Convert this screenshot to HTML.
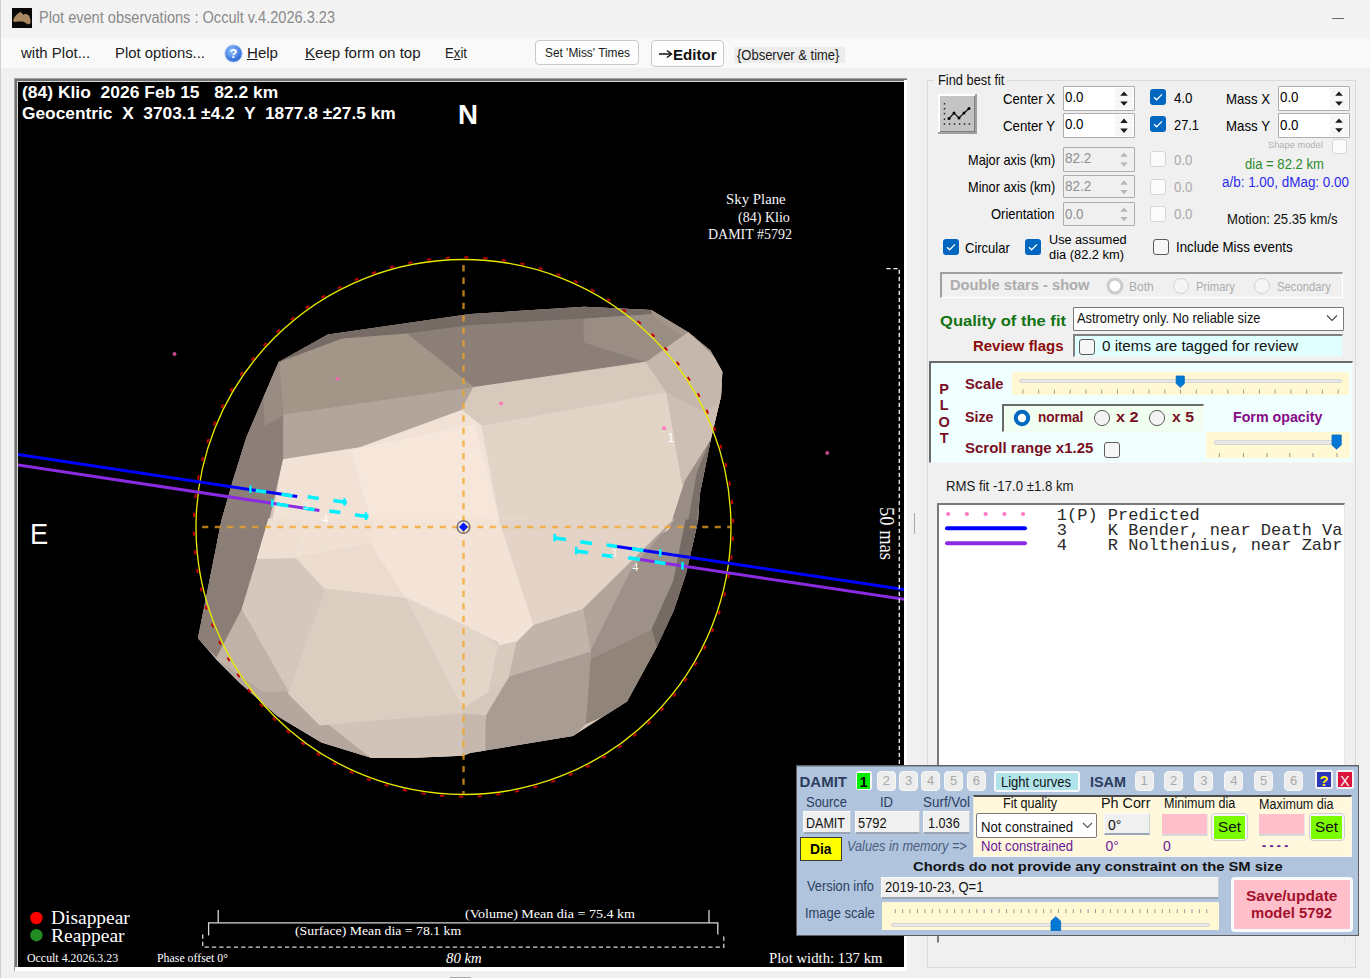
<!DOCTYPE html>
<html><head><meta charset="utf-8"><title>Plot event observations</title>
<style>
html,body{margin:0;padding:0;}
body{width:1370px;height:978px;overflow:hidden;position:relative;background:#f0f0f0;font-family:"Liberation Sans",sans-serif;}
.a{position:absolute;}
.t{position:absolute;line-height:0;white-space:pre;transform-origin:0 0;}

</style></head><body>
<div class="a" style="left:0.0px;top:0.0px;width:1370.0px;height:38.0px;background:#f3f3f3;"></div>
<div class="a" style="left:0.0px;top:38.0px;width:1370.0px;height:30.0px;background:#f9f9f9;"></div>
<div class="a" style="left:0.0px;top:0.0px;width:1.0px;height:978.0px;background:#cfcfcf;"></div>
<svg class="a" style="left:12px;top:8px" width="20" height="20" viewBox="0 0 20 20"><rect width="20" height="20" fill="#0a0908"/><path d="M1.1 12.3 C2 9 5 6 8.3 4.1 C10 4.5 10.5 6.5 11.3 6.7 C12 6 13 5.8 14.2 6.1 C16.5 6.8 17.8 8.5 17.8 9.7 C18.6 11.5 18.8 13.5 18.5 14.9 C18 16 16.5 16.5 15.9 16.2 C14 15.5 12.5 14 11.3 13.6 C9.5 13.4 7.5 13.6 6 13.6 C4.5 14 3 14.2 2.8 13.9 C1.8 13.6 1 13 1.1 12.3 Z" fill="#a98a62"/></svg>
<div class="t" id="t0" style="left:38.80px;top:18.36px;font-size:15.7px;font-family:'Liberation Sans', sans-serif;color:#8a8a8a;transform:scaleX(0.9283);">Plot event observations : Occult v.4.2026.3.23</div>
<div class="a" style="left:1332.0px;top:18.0px;width:12.0px;height:1.0px;background:#6a6a6a;"></div>
<div class="a" style="left:450.0px;top:976.5px;width:21.0px;height:1.5px;background:#a8a8a8;"></div>
<div class="t" id="t1" style="left:21.00px;top:52.80px;font-size:15px;font-family:'Liberation Sans', sans-serif;color:#1c1c1c;">with Plot...</div>
<div class="t" id="t2" style="left:115.00px;top:52.80px;font-size:15px;font-family:'Liberation Sans', sans-serif;color:#1c1c1c;transform:scaleX(0.9902);">Plot options...</div>
<svg class="a" style="left:224px;top:44px" width="19" height="19" viewBox="0 0 19 19"><defs><radialGradient id="hg" cx="40%" cy="35%" r="70%"><stop offset="0" stop-color="#8fc0ff"/><stop offset="1" stop-color="#1f5fd0"/></radialGradient></defs><circle cx="9.5" cy="9.5" r="8.6" fill="url(#hg)" stroke="#a9c4ee" stroke-width="1"/><text x="9.6" y="14.3" text-anchor="middle" font-family="Liberation Sans" font-weight="bold" font-size="13" fill="#fff">?</text></svg>
<div class="t" id="t3" style="left:247.00px;top:52.80px;font-size:15px;font-family:'Liberation Sans', sans-serif;color:#1c1c1c;transform:scaleX(1.0040);"><u>H</u>elp</div>
<div class="t" id="t4" style="left:305.00px;top:52.80px;font-size:15px;font-family:'Liberation Sans', sans-serif;color:#1c1c1c;transform:scaleX(1.0044);"><u>K</u>eep form on top</div>
<div class="t" id="t5" style="left:445.00px;top:52.80px;font-size:15px;font-family:'Liberation Sans', sans-serif;color:#1c1c1c;transform:scaleX(0.8795);">E<u>x</u>it</div>
<div class="a" style="left:535.0px;top:40.0px;width:104.0px;height:25.0px;background:#fdfdfd;border:1px solid #c9c9c9;box-sizing:border-box;border-radius:4px;"></div>
<div class="t" id="t6" style="left:544.50px;top:52.67px;font-size:12.5px;font-family:'Liberation Sans', sans-serif;color:#1a1a1a;transform:scaleX(0.9496);">Set &#x27;Miss&#x27; Times</div>
<div class="a" style="left:651.0px;top:40.0px;width:73.0px;height:27.0px;background:#fdfdfd;border:1px solid #c9c9c9;box-sizing:border-box;border-radius:4px;"></div>
<svg class="a" style="left:658px;top:48px" width="16" height="12"><line x1="1" y1="6" x2="13" y2="6" stroke="#111" stroke-width="1.5"/><polyline points="9,2.5 13.5,6 9,9.5" fill="none" stroke="#111" stroke-width="1.5"/></svg>
<div class="t" id="t7" style="left:673.00px;top:54.80px;font-size:15px;font-family:'Liberation Sans', sans-serif;color:#111;font-weight:bold;transform:scaleX(1.0036);">Editor</div>
<div class="a" style="left:734.0px;top:47.0px;width:111.0px;height:16.0px;background:#ececec;"></div>
<div class="t" id="t8" style="left:737.00px;top:55.45px;font-size:14px;font-family:'Liberation Sans', sans-serif;color:#1a1a1a;transform:scaleX(0.9267);">{Observer &amp; time}</div>
<div class="a" style="left:14.0px;top:78.0px;width:893.0px;height:893.0px;background:#a0a0a0;"></div>
<div class="a" style="left:15.4px;top:79.2px;width:891.6px;height:891.8px;background:#707070;"></div>
<div class="a" style="left:17.0px;top:80.7px;width:890.0px;height:890.3px;background:#d6d6d6;"></div>
<div class="a" style="left:903.7px;top:79.5px;width:3.5px;height:891.5px;background:#ffffff;"></div>
<div class="a" style="left:14.5px;top:967.0px;width:892.7px;height:4.0px;background:#ffffff;"></div>
<div class="a" style="left:18.2px;top:82.0px;width:885.5px;height:885.0px;background:#000000;"></div>
<svg class="a" style="left:18px;top:82px" width="886" height="885" viewBox="18 82 886 885">
<defs><clipPath id="sil"><polygon points="278.7,362.0 328.0,334.4 470.0,314.0 584.2,306.8 651.2,310.0 688.6,332.4 710.5,350.6 722.4,371.8 721.1,395.8 710.5,441.0 699.8,494.3 698.2,520.0 686.0,574.0 673.7,610.8 656.5,647.6 627.1,701.6 607.4,713.9 573.1,736.0 470.0,753.1 463.5,755.7 409.0,758.0 371.7,758.0 321.4,742.6 277.6,716.3 240.4,683.5 216.3,659.4 197.9,638.2 205.8,598.8 221.5,520.0 233.0,480.0 246.4,437.2 264.0,396.0"/></clipPath></defs>
<polygon points="278.7,362.0 328.0,334.4 470.0,314.0 584.2,306.8 651.2,310.0 688.6,332.4 710.5,350.6 722.4,371.8 721.1,395.8 710.5,441.0 699.8,494.3 698.2,520.0 686.0,574.0 673.7,610.8 656.5,647.6 627.1,701.6 607.4,713.9 573.1,736.0 470.0,753.1 463.5,755.7 409.0,758.0 371.7,758.0 321.4,742.6 277.6,716.3 240.4,683.5 216.3,659.4 197.9,638.2 205.8,598.8 221.5,520.0 233.0,480.0 246.4,437.2 264.0,396.0" fill="#d3c4b9"/>
<g clip-path="url(#sil)" shape-rendering="auto">
<polygon points="282.6,458.6 359.5,446.8 462.0,409.3 481.7,425.1 505.3,547.3 268.8,547.3" fill="#f2e2d6" stroke="#f2e2d6" stroke-width="1.1" stroke-linejoin="round"/>
<polygon points="351.6,450.7 473.8,425.1 505.3,547.3 379.2,547.3" fill="#f7e7db" stroke="#f7e7db" stroke-width="1.1" stroke-linejoin="round"/>
<polygon points="481.7,425.1 666.9,391.6 682.7,484.2 702.4,547.3 505.3,547.3" fill="#e3d4c8" stroke="#e3d4c8" stroke-width="1.1" stroke-linejoin="round"/>
<polygon points="404.8,332.4 584.2,306.8 584.2,342.3 647.2,362.0 473.8,387.6" fill="#8b7f77" stroke="#8b7f77" stroke-width="1.1" stroke-linejoin="round"/>
<polygon points="584.2,306.8 651.2,310.0 688.6,332.4 647.2,362.0 584.2,342.3" fill="#9a8d84" stroke="#9a8d84" stroke-width="1.1" stroke-linejoin="round"/>
<polygon points="278.7,362.0 328.0,334.4 404.8,332.4 473.8,387.6 282.6,415.2" fill="#a39689" stroke="#a39689" stroke-width="1.1" stroke-linejoin="round"/>
<polygon points="282.6,415.2 473.8,387.6 462.0,409.3 359.5,446.8 282.6,458.6" fill="#b2a59b" stroke="#b2a59b" stroke-width="1.1" stroke-linejoin="round"/>
<polygon points="278.7,362.0 328.0,334.4 470.0,314.0 584.2,306.8 651.2,310.0 651.2,313.5 584.0,318.0 470.0,324.4 406.0,333.0 342.0,338.0 283.0,360.0" fill="#766b65" stroke="#766b65" stroke-width="1.1" stroke-linejoin="round"/>
<polygon points="651.2,310.0 688.6,332.4 710.5,350.6 722.4,371.8 715.0,372.0 691.0,342.0 655.0,317.0" fill="#a39589" stroke="#a39589" stroke-width="1.1" stroke-linejoin="round"/>
<polygon points="473.8,387.6 647.2,362.0 666.9,391.6 481.7,425.1 462.0,409.3" fill="#d8c9bd" stroke="#d8c9bd" stroke-width="1.1" stroke-linejoin="round"/>
<polygon points="647.2,362.0 688.6,332.4 720.2,364.0 722.1,409.3 682.7,484.2 666.9,391.6" fill="#c6b8ad" stroke="#c6b8ad" stroke-width="1.1" stroke-linejoin="round"/>
<polygon points="666.9,391.6 722.1,409.3 721.1,395.8 710.5,441.0 685.2,481.0 682.7,484.2" fill="#cdbfb4" stroke="#cdbfb4" stroke-width="1.1" stroke-linejoin="round"/>
<polygon points="646.6,362.5 691.8,338.6 722.4,371.8 721.1,395.8 705.0,411.8 666.6,391.8" fill="#c5b7ac" stroke="#c5b7ac" stroke-width="1.1" stroke-linejoin="round"/>
<polygon points="710.5,441.0 699.8,494.3 691.8,560.2 659.9,560.2 685.2,481.0" fill="#9a8d85" stroke="#9a8d85" stroke-width="1.1" stroke-linejoin="round"/>
<polygon points="710.5,441.0 699.8,494.3 691.8,560.2 681.9,560.2 697.2,473.0" fill="#7a6f69" stroke="#7a6f69" stroke-width="1.1" stroke-linejoin="round"/>
<polygon points="278.7,362.0 282.6,415.2 282.6,458.6 269.0,519.0 263.0,540.0 210.0,540.0 233.0,480.0 246.4,437.2 264.0,396.0" fill="#8c7f77" stroke="#8c7f77" stroke-width="1.1" stroke-linejoin="round"/>
<polygon points="278.7,362.0 282.6,415.2 264.9,425.1 264.0,396.0" fill="#998c83" stroke="#998c83" stroke-width="1.1" stroke-linejoin="round"/>
<polygon points="221.5,520.0 269.0,519.0 257.5,558.5 241.8,610.3 217.0,657.5 197.9,638.2 205.8,598.8" fill="#8b7e76" stroke="#8b7e76" stroke-width="1.1" stroke-linejoin="round"/>
<polygon points="269.0,519.0 375.3,520.0 371.3,543.6 296.4,557.4 326.0,589.0 257.5,558.5" fill="#f1e1d5" stroke="#f1e1d5" stroke-width="1.1" stroke-linejoin="round"/>
<polygon points="296.4,557.4 371.3,543.6 406.8,598.8 326.0,589.0" fill="#ecdccf" stroke="#ecdccf" stroke-width="1.1" stroke-linejoin="round"/>
<polygon points="375.3,520.0 529.0,520.0 533.4,626.6 515.9,642.1 498.4,646.0 475.1,630.5 406.8,598.8 371.3,543.6" fill="#f4e3d7" stroke="#f4e3d7" stroke-width="1.1" stroke-linejoin="round"/>
<polygon points="257.5,558.5 295.8,558.5 325.0,590.0 286.8,691.3 241.8,610.3" fill="#d6c7bc" stroke="#d6c7bc" stroke-width="1.1" stroke-linejoin="round"/>
<polygon points="217.0,657.5 241.8,610.3 288.5,692.3 262.3,692.3 216.3,659.4" fill="#c1b2a7" stroke="#c1b2a7" stroke-width="1.1" stroke-linejoin="round"/>
<polygon points="216.3,659.4 262.3,692.3 288.5,692.3 330.1,725.1 371.7,758.0 321.4,742.6 277.6,716.3 240.4,683.5" fill="#b5a79d" stroke="#b5a79d" stroke-width="1.1" stroke-linejoin="round"/>
<polygon points="269.0,519.0 300.0,519.0 296.4,557.4 257.5,558.5" fill="#efdfd3" stroke="#efdfd3" stroke-width="1.1" stroke-linejoin="round"/>
<polygon points="326.0,589.0 406.8,598.8 497.4,642.2 509.3,677.7 462.0,713.1 320.1,725.0 288.5,693.4" fill="#dccdc1" stroke="#dccdc1" stroke-width="1.1" stroke-linejoin="round"/>
<polygon points="406.8,598.8 475.1,630.5 463.5,708.2" fill="#e4d5c9" stroke="#e4d5c9" stroke-width="1.1" stroke-linejoin="round"/>
<polygon points="330.1,725.1 461.6,714.0 463.5,714.0 463.5,755.7 409.0,758.0 371.7,758.0" fill="#d2c3b8" stroke="#d2c3b8" stroke-width="1.1" stroke-linejoin="round"/>
<polygon points="470.0,519.0 499.4,520.0 533.8,625.5 514.2,645.2 470.0,628.0" fill="#f3e3d7" stroke="#f3e3d7" stroke-width="1.1" stroke-linejoin="round"/>
<polygon points="499.4,520.0 673.7,520.0 582.9,609.6 533.8,625.5" fill="#e4d4c8" stroke="#e4d4c8" stroke-width="1.1" stroke-linejoin="round"/>
<polygon points="673.7,520.0 661.4,534.7 632.0,569.1 590.2,652.5 582.9,609.6" fill="#b3a59b" stroke="#b3a59b" stroke-width="1.1" stroke-linejoin="round"/>
<polygon points="661.4,534.7 686.0,520.0 673.7,581.3 651.6,630.4 590.2,659.9 590.2,652.5 632.0,569.1" fill="#9e9189" stroke="#9e9189" stroke-width="1.1" stroke-linejoin="round"/>
<polygon points="686.0,520.0 698.2,520.0 686.0,574.0 673.7,610.8 656.5,647.6 651.6,630.4 673.7,581.3" fill="#756a64" stroke="#756a64" stroke-width="1.1" stroke-linejoin="round"/>
<polygon points="590.2,659.9 651.6,630.4 656.5,647.6 627.1,701.6 607.4,713.9 585.3,723.7" fill="#918479" stroke="#918479" stroke-width="1.1" stroke-linejoin="round"/>
<polygon points="514.2,645.2 533.8,625.5 582.9,609.6 590.2,652.5 509.3,677.1" fill="#c2b4aa" stroke="#c2b4aa" stroke-width="1.1" stroke-linejoin="round"/>
<polygon points="509.3,677.1 590.2,652.5 590.2,659.9 585.3,723.7 573.1,736.0 482.3,750.7 487.2,711.4" fill="#a99c93" stroke="#a99c93" stroke-width="1.1" stroke-linejoin="round"/>
<polygon points="475.1,630.5 498.4,646.0 488.7,692.6 463.5,708.2" fill="#e4d5c9" stroke="#e4d5c9" stroke-width="1.1" stroke-linejoin="round"/>
<polygon points="498.4,646.0 515.9,642.1 508.2,677.1 488.7,692.6" fill="#d9cabe" stroke="#d9cabe" stroke-width="1.1" stroke-linejoin="round"/>
<polygon points="463.5,708.2 488.7,692.6 508.2,677.1 484.9,715.9 463.5,714.0" fill="#d7c8bc" stroke="#d7c8bc" stroke-width="1.1" stroke-linejoin="round"/>
<polygon points="463.5,714.0 484.9,715.9 484.9,750.9 463.5,755.7" fill="#c6b8ad" stroke="#c6b8ad" stroke-width="1.1" stroke-linejoin="round"/>
</g>
<circle cx="463.5" cy="527" r="269.7" fill="none" stroke="#c80000" stroke-width="1.9" stroke-dasharray="4.2 14.63" stroke-dashoffset="9.1"/>
<circle cx="463.5" cy="527" r="267.5" fill="none" stroke="#e8e800" stroke-width="1.35"/>
<line x1="196" y1="527" x2="731" y2="527" stroke="#f2a520" stroke-opacity="0.74" stroke-width="2.4" stroke-dasharray="6.1 6.4" stroke-dashoffset="6.3"/>
<line x1="463.5" y1="259.5" x2="463.5" y2="794.5" stroke="#f2a520" stroke-opacity="0.74" stroke-width="2.4" stroke-dasharray="6.3 6.22" stroke-dashoffset="6.92"/>
<circle cx="174.5" cy="354.0" r="2" fill="#ff60b8" fill-opacity="0.75"/>
<circle cx="337.7" cy="378.7" r="2" fill="#ff60b8" fill-opacity="0.75"/>
<circle cx="501.1" cy="403.5" r="2" fill="#ff60b8" fill-opacity="0.75"/>
<circle cx="664.1" cy="428.2" r="2" fill="#ff60b8" fill-opacity="0.75"/>
<circle cx="827.2" cy="452.9" r="2" fill="#ff60b8" fill-opacity="0.75"/>
<line x1="18" y1="454.6" x2="297.2" y2="496.6" stroke="#0000ff" stroke-width="3"/>
<line x1="617" y1="546.4" x2="904" y2="589.6" stroke="#0000ff" stroke-width="3"/>
<line x1="18" y1="465.1" x2="319.4" y2="510.4" stroke="#8a2be2" stroke-width="3"/>
<line x1="640" y1="559.6" x2="904" y2="599.3" stroke="#8a2be2" stroke-width="3"/>
<line x1="255.7" y1="490.4" x2="266.2" y2="492.0" stroke="#00f0ff" stroke-width="3.5"/>
<line x1="281.4" y1="494.2" x2="292.5" y2="495.9" stroke="#00f0ff" stroke-width="3.5"/>
<line x1="307.7" y1="496.7" x2="318.8" y2="498.4" stroke="#00f0ff" stroke-width="3.5"/>
<line x1="333.4" y1="500.6" x2="346.8" y2="502.6" stroke="#00f0ff" stroke-width="3.5"/>
<line x1="250.4" y1="485.6" x2="250.4" y2="493.1" stroke="#00f0ff" stroke-width="2.5"/>
<line x1="344.5" y1="498.2" x2="344.5" y2="505.7" stroke="#00f0ff" stroke-width="2.5"/>
<line x1="276.7" y1="504.0" x2="288.4" y2="505.7" stroke="#00f0ff" stroke-width="3.5"/>
<line x1="303.6" y1="508.0" x2="314.7" y2="509.7" stroke="#00f0ff" stroke-width="3.5"/>
<line x1="329.3" y1="510.9" x2="340.4" y2="512.6" stroke="#00f0ff" stroke-width="3.5"/>
<line x1="355" y1="514.8" x2="368.4" y2="516.8" stroke="#00f0ff" stroke-width="3.5"/>
<line x1="272.3" y1="499.3" x2="272.3" y2="506.8" stroke="#00f0ff" stroke-width="2.5"/>
<line x1="366" y1="512.4" x2="366" y2="519.9" stroke="#00f0ff" stroke-width="2.5"/>
<line x1="554.6" y1="537.9" x2="566" y2="539.6" stroke="#00f0ff" stroke-width="3.5"/>
<line x1="580.3" y1="541.7" x2="592" y2="543.5" stroke="#00f0ff" stroke-width="3.5"/>
<line x1="606.6" y1="544.9" x2="617" y2="546.4" stroke="#00f0ff" stroke-width="3.5"/>
<line x1="632" y1="548.7" x2="643.4" y2="550.4" stroke="#00f0ff" stroke-width="3.5"/>
<line x1="554.6" y1="533.9" x2="554.6" y2="541.4" stroke="#00f0ff" stroke-width="2.5"/>
<line x1="660.3" y1="549.0" x2="660.3" y2="556.5" stroke="#00f0ff" stroke-width="2.5"/>
<line x1="576.2" y1="551.0" x2="588" y2="552.8" stroke="#00f0ff" stroke-width="3.5"/>
<line x1="601.9" y1="554.9" x2="613" y2="556.5" stroke="#00f0ff" stroke-width="3.5"/>
<line x1="628.2" y1="557.8" x2="639.9" y2="559.6" stroke="#00f0ff" stroke-width="3.5"/>
<line x1="654.5" y1="561.8" x2="665.6" y2="563.4" stroke="#00f0ff" stroke-width="3.5"/>
<line x1="576.2" y1="547.0" x2="576.2" y2="554.5" stroke="#00f0ff" stroke-width="2.5"/>
<line x1="682.5" y1="562.0" x2="682.5" y2="569.5" stroke="#00f0ff" stroke-width="2.5"/>
<circle cx="463.5" cy="527" r="6.3" fill="none" stroke="#7a7a7a" stroke-width="1.6"/>
<polygon points="459.0,527 463.5,522.5 468.0,527 463.5,531.5" fill="#0018ff"/>
<polyline points="886.4,268.7 899.3,268.7 899.3,785.3 886.4,785.3" fill="none" stroke="#f0f0f0" stroke-width="1.3" stroke-dasharray="4.2 2.8"/>
<polyline points="208.6,935.5 208.6,922.8 717.8,922.8 717.8,934.6" fill="none" stroke="#d8d8d8" stroke-width="1.3"/>
<line x1="218.2" y1="910" x2="218.2" y2="922.8" stroke="#d8d8d8" stroke-width="1.3"/>
<line x1="709" y1="910" x2="709" y2="922.8" stroke="#d8d8d8" stroke-width="1.3"/>
<polyline points="202.7,934.5 202.7,947.2 723.8,947.2 723.8,936" fill="none" stroke="#d8d8d8" stroke-width="1.3" stroke-dasharray="4.3 3"/>
<circle cx="36.4" cy="918" r="6.2" fill="#ff0000"/>
<circle cx="36.4" cy="935.2" r="6.2" fill="#228b22"/>
</svg>
<div class="a" style="left:927.0px;top:79.5px;width:429.0px;height:888.5px;border:1px solid #dadada;box-sizing:border-box;"></div>
<div class="a" style="left:934.0px;top:72.0px;width:73.0px;height:16.0px;background:#f0f0f0;"></div>
<div class="t" id="t9" style="left:937.60px;top:80.37px;font-size:14.5px;font-family:'Liberation Sans', sans-serif;color:#111;transform:scaleX(0.8859);">Find best fit</div>
<svg class="a" style="left:938px;top:94px" width="39" height="40" viewBox="0 0 39 40"><rect x="0" y="0" width="39" height="40" fill="#a0a0a0"/><rect x="0" y="0" width="37" height="38" fill="#fff"/><rect x="2" y="2" width="35" height="36" fill="#7f7f7f"/><rect x="2" y="2" width="34" height="35" fill="#c4c4c4"/><rect x="5.75" y="29.3" width="1.5" height="1.5" fill="#222"/><rect x="10.85" y="29.3" width="1.5" height="1.5" fill="#222"/><rect x="15.75" y="29.3" width="1.5" height="1.5" fill="#222"/><rect x="20.85" y="29.3" width="1.5" height="1.5" fill="#222"/><rect x="25.75" y="29.3" width="1.5" height="1.5" fill="#222"/><rect x="30.65" y="29.3" width="1.5" height="1.5" fill="#222"/><rect x="5.75" y="9.05" width="1.5" height="1.5" fill="#222"/><rect x="5.75" y="13.95" width="1.5" height="1.5" fill="#222"/><rect x="5.75" y="18.85" width="1.5" height="1.5" fill="#222"/><rect x="5.75" y="24.45" width="1.5" height="1.5" fill="#222"/><polyline points="11,24.5 16,19 21,24 26,19 31,14.5" fill="none" stroke="#111" stroke-width="1.2"/><circle cx="11" cy="24.5" r="1.5" fill="#000"/><circle cx="16" cy="19" r="1.5" fill="#000"/><circle cx="21" cy="24" r="1.5" fill="#000"/><circle cx="26" cy="19" r="1.5" fill="#000"/><circle cx="31" cy="14.5" r="1.5" fill="#000"/></svg>
<div class="t" id="t10" style="left:1003.00px;top:99.37px;font-size:14.5px;font-family:'Liberation Sans', sans-serif;color:#000;transform:scaleX(0.9085);">Center X</div>
<div class="t" id="t11" style="left:1003.00px;top:126.47px;font-size:14.5px;font-family:'Liberation Sans', sans-serif;color:#000;transform:scaleX(0.9128);">Center Y</div>
<div class="t" id="t12" style="left:967.80px;top:159.77px;font-size:14.5px;font-family:'Liberation Sans', sans-serif;color:#000;transform:scaleX(0.8800);">Major axis (km)</div>
<div class="t" id="t13" style="left:967.80px;top:186.77px;font-size:14.5px;font-family:'Liberation Sans', sans-serif;color:#000;transform:scaleX(0.8800);">Minor axis (km)</div>
<div class="t" id="t14" style="left:990.50px;top:213.67px;font-size:14.5px;font-family:'Liberation Sans', sans-serif;color:#000;transform:scaleX(0.8952);">Orientation</div>
<div class="a" style="left:1063.0px;top:86.0px;width:72.0px;height:24.5px;background:#ffffff;border:1px solid #adadad;box-sizing:border-box;border-radius:1px;"></div>
<div class="a" style="left:1115.0px;top:88.0px;width:18.0px;height:9.8px;background:#f6f6f6;"></div>
<div class="a" style="left:1115.0px;top:98.8px;width:18.0px;height:9.8px;background:#f6f6f6;"></div>
<svg class="a" style="left:1119px;top:86px" width="10" height="24.5"><polygon points="1.2,9.849999999999994 5,5.5499999999999945 8.8,9.849999999999994" fill="#1a1a1a"/><polygon points="1.2,15.440000000000001 5,19.84 8.8,15.440000000000001" fill="#1a1a1a"/></svg>
<div class="t" id="t15" style="left:1065.20px;top:97.17px;font-size:14.5px;font-family:'Liberation Sans', sans-serif;color:#000;transform:scaleX(0.9171);">0.0</div>
<div class="a" style="left:1063.0px;top:113.3px;width:72.0px;height:24.7px;background:#ffffff;border:1px solid #adadad;box-sizing:border-box;border-radius:1px;"></div>
<div class="a" style="left:1115.0px;top:115.3px;width:18.0px;height:9.9px;background:#f6f6f6;"></div>
<div class="a" style="left:1115.0px;top:126.2px;width:18.0px;height:9.8px;background:#f6f6f6;"></div>
<svg class="a" style="left:1119px;top:113.3px" width="10" height="24.700000000000003"><polygon points="1.2,9.909999999999997 5,5.609999999999997 8.8,9.909999999999997" fill="#1a1a1a"/><polygon points="1.2,15.584000000000007 5,19.984000000000005 8.8,15.584000000000007" fill="#1a1a1a"/></svg>
<div class="t" id="t16" style="left:1065.20px;top:124.47px;font-size:14.5px;font-family:'Liberation Sans', sans-serif;color:#000;transform:scaleX(0.9171);">0.0</div>
<div class="a" style="left:1063.0px;top:147.0px;width:72.0px;height:24.5px;background:#f0f0f0;border:1px solid #adadad;box-sizing:border-box;border-radius:1px;"></div>
<div class="a" style="left:1115.0px;top:149.0px;width:18.0px;height:9.8px;background:#f0f0f0;"></div>
<div class="a" style="left:1115.0px;top:159.8px;width:18.0px;height:9.8px;background:#f0f0f0;"></div>
<svg class="a" style="left:1119px;top:147px" width="10" height="24.5"><polygon points="1.2,9.849999999999994 5,5.5499999999999945 8.8,9.849999999999994" fill="#b8b8b8"/><polygon points="1.2,15.439999999999987 5,19.839999999999986 8.8,15.439999999999987" fill="#b8b8b8"/></svg>
<div class="t" id="t17" style="left:1065.20px;top:158.17px;font-size:14.5px;font-family:'Liberation Sans', sans-serif;color:#8f8f8f;transform:scaleX(0.9350);">82.2</div>
<div class="a" style="left:1063.0px;top:174.7px;width:72.0px;height:23.8px;background:#f0f0f0;border:1px solid #adadad;box-sizing:border-box;border-radius:1px;"></div>
<div class="a" style="left:1115.0px;top:176.7px;width:18.0px;height:9.4px;background:#f0f0f0;"></div>
<div class="a" style="left:1115.0px;top:187.1px;width:18.0px;height:9.4px;background:#f0f0f0;"></div>
<svg class="a" style="left:1119px;top:174.7px" width="10" height="23.80000000000001"><polygon points="1.2,9.640000000000015 5,5.340000000000015 8.8,9.640000000000015" fill="#b8b8b8"/><polygon points="1.2,14.935999999999996 5,19.335999999999995 8.8,14.935999999999996" fill="#b8b8b8"/></svg>
<div class="t" id="t18" style="left:1065.20px;top:185.87px;font-size:14.5px;font-family:'Liberation Sans', sans-serif;color:#8f8f8f;transform:scaleX(0.9350);">82.2</div>
<div class="a" style="left:1063.0px;top:202.4px;width:72.0px;height:23.8px;background:#f0f0f0;border:1px solid #adadad;box-sizing:border-box;border-radius:1px;"></div>
<div class="a" style="left:1115.0px;top:204.4px;width:18.0px;height:9.4px;background:#f0f0f0;"></div>
<div class="a" style="left:1115.0px;top:214.8px;width:18.0px;height:9.4px;background:#f0f0f0;"></div>
<svg class="a" style="left:1119px;top:202.4px" width="10" height="23.799999999999983"><polygon points="1.2,9.639999999999986 5,5.3399999999999865 8.8,9.639999999999986" fill="#b8b8b8"/><polygon points="1.2,14.935999999999996 5,19.335999999999995 8.8,14.935999999999996" fill="#b8b8b8"/></svg>
<div class="t" id="t19" style="left:1065.20px;top:213.57px;font-size:14.5px;font-family:'Liberation Sans', sans-serif;color:#8f8f8f;transform:scaleX(0.9171);">0.0</div>
<div class="a" style="left:1150px;top:89.3px;width:16px;height:16px"><svg width="16" height="16" viewBox="0 0 16 16"><rect x="0" y="0" width="16" height="16" rx="3" fill="#0067c0"/><polyline points="4,8.3 6.6,10.8 12,5.4" fill="none" stroke="#fff" stroke-width="1.3"/></svg></div>
<div class="a" style="left:1150px;top:116.4px;width:16px;height:16px"><svg width="16" height="16" viewBox="0 0 16 16"><rect x="0" y="0" width="16" height="16" rx="3" fill="#0067c0"/><polyline points="4,8.3 6.6,10.8 12,5.4" fill="none" stroke="#fff" stroke-width="1.3"/></svg></div>
<div class="a" style="left:1150.0px;top:151.0px;width:16.0px;height:16.0px;background:#fbfbfb;border:1px solid #d6d6d6;box-sizing:border-box;border-radius:3px;"></div>
<div class="a" style="left:1150.0px;top:178.8px;width:16.0px;height:16.0px;background:#fbfbfb;border:1px solid #d6d6d6;box-sizing:border-box;border-radius:3px;"></div>
<div class="a" style="left:1150.0px;top:206.0px;width:16.0px;height:16.0px;background:#fbfbfb;border:1px solid #d6d6d6;box-sizing:border-box;border-radius:3px;"></div>
<div class="t" id="t20" style="left:1173.80px;top:97.80px;font-size:15px;font-family:'Liberation Sans', sans-serif;color:#000;transform:scaleX(0.8869);">4.0</div>
<div class="t" id="t21" style="left:1173.80px;top:125.10px;font-size:15px;font-family:'Liberation Sans', sans-serif;color:#000;transform:scaleX(0.8561);">27.1</div>
<div class="t" id="t22" style="left:1173.80px;top:159.80px;font-size:15px;font-family:'Liberation Sans', sans-serif;color:#a8a8a8;transform:scaleX(0.8869);">0.0</div>
<div class="t" id="t23" style="left:1173.80px;top:187.00px;font-size:15px;font-family:'Liberation Sans', sans-serif;color:#a8a8a8;transform:scaleX(0.8869);">0.0</div>
<div class="t" id="t24" style="left:1173.80px;top:214.20px;font-size:15px;font-family:'Liberation Sans', sans-serif;color:#a8a8a8;transform:scaleX(0.8869);">0.0</div>
<div class="t" id="t25" style="left:1226.00px;top:99.17px;font-size:14.5px;font-family:'Liberation Sans', sans-serif;color:#000;transform:scaleX(0.9101);">Mass X</div>
<div class="t" id="t26" style="left:1226.00px;top:126.37px;font-size:14.5px;font-family:'Liberation Sans', sans-serif;color:#000;transform:scaleX(0.9149);">Mass Y</div>
<div class="a" style="left:1278.0px;top:86.0px;width:72.0px;height:24.5px;background:#ffffff;border:1px solid #adadad;box-sizing:border-box;border-radius:1px;"></div>
<div class="a" style="left:1330.0px;top:88.0px;width:18.0px;height:9.8px;background:#f6f6f6;"></div>
<div class="a" style="left:1330.0px;top:98.8px;width:18.0px;height:9.8px;background:#f6f6f6;"></div>
<svg class="a" style="left:1334px;top:86px" width="10" height="24.5"><polygon points="1.2,9.849999999999994 5,5.5499999999999945 8.8,9.849999999999994" fill="#1a1a1a"/><polygon points="1.2,15.440000000000001 5,19.84 8.8,15.440000000000001" fill="#1a1a1a"/></svg>
<div class="t" id="t27" style="left:1280.20px;top:97.17px;font-size:14.5px;font-family:'Liberation Sans', sans-serif;color:#000;transform:scaleX(0.9171);">0.0</div>
<div class="a" style="left:1278.0px;top:113.4px;width:72.0px;height:24.2px;background:#ffffff;border:1px solid #adadad;box-sizing:border-box;border-radius:1px;"></div>
<div class="a" style="left:1330.0px;top:115.4px;width:18.0px;height:9.6px;background:#f6f6f6;"></div>
<div class="a" style="left:1330.0px;top:126.0px;width:18.0px;height:9.6px;background:#f6f6f6;"></div>
<svg class="a" style="left:1334px;top:113.4px" width="10" height="24.19999999999999"><polygon points="1.2,9.759999999999991 5,5.459999999999991 8.8,9.759999999999991" fill="#1a1a1a"/><polygon points="1.2,15.224000000000007 5,19.624000000000006 8.8,15.224000000000007" fill="#1a1a1a"/></svg>
<div class="t" id="t28" style="left:1280.20px;top:124.57px;font-size:14.5px;font-family:'Liberation Sans', sans-serif;color:#000;transform:scaleX(0.9171);">0.0</div>
<div class="t" id="t29" style="left:1268.00px;top:144.71px;font-size:9.5px;font-family:'Liberation Sans', sans-serif;color:#b0b0b0;transform:scaleX(0.9771);">Shape model</div>
<div class="a" style="left:1331.5px;top:139.0px;width:15.0px;height:15.0px;background:#fbfbfb;border:1px solid #d6d6d6;box-sizing:border-box;border-radius:3px;"></div>
<div class="t" id="t30" style="left:1244.70px;top:164.15px;font-size:14px;font-family:'Liberation Sans', sans-serif;color:#2d8a2d;transform:scaleX(0.9344);">dia = 82.2 km</div>
<div class="t" id="t31" style="left:1222.00px;top:181.75px;font-size:14px;font-family:'Liberation Sans', sans-serif;color:#2b2bea;transform:scaleX(0.9597);">a/b: 1.00, dMag: 0.00</div>
<div class="t" id="t32" style="left:1227.00px;top:218.55px;font-size:14px;font-family:'Liberation Sans', sans-serif;color:#111;transform:scaleX(0.9351);">Motion: 25.35 km/s</div>
<div class="a" style="left:942.7px;top:238.8px;width:16px;height:16px"><svg width="16" height="16" viewBox="0 0 16 16"><rect x="0" y="0" width="16" height="16" rx="3" fill="#0067c0"/><polyline points="4,8.3 6.6,10.8 12,5.4" fill="none" stroke="#fff" stroke-width="1.3"/></svg></div>
<div class="t" id="t33" style="left:965.00px;top:247.57px;font-size:14.5px;font-family:'Liberation Sans', sans-serif;color:#000;transform:scaleX(0.8968);">Circular</div>
<div class="a" style="left:1025px;top:238.8px;width:16px;height:16px"><svg width="16" height="16" viewBox="0 0 16 16"><rect x="0" y="0" width="16" height="16" rx="3" fill="#0067c0"/><polyline points="4,8.3 6.6,10.8 12,5.4" fill="none" stroke="#fff" stroke-width="1.3"/></svg></div>
<div class="t" id="t34" style="left:1049.00px;top:239.97px;font-size:12.5px;font-family:'Liberation Sans', sans-serif;color:#000;transform:scaleX(1.0139);">Use assumed</div>
<div class="t" id="t35" style="left:1049.00px;top:255.47px;font-size:12.5px;font-family:'Liberation Sans', sans-serif;color:#000;transform:scaleX(1.0281);">dia (82.2 km)</div>
<div class="a" style="left:1152.8px;top:239.0px;width:16.0px;height:16.0px;background:#f7f7f7;border:1px solid #5c5c5c;box-sizing:border-box;border-radius:3px;"></div>
<div class="t" id="t36" style="left:1176.40px;top:247.27px;font-size:14.5px;font-family:'Liberation Sans', sans-serif;color:#000;transform:scaleX(0.9156);">Include Miss events</div>
<div class="a" style="left:940.0px;top:272.0px;width:403.0px;height:26.0px;background:#f0f0f0;border-top:2px solid #a0a0a0;border-left:2px solid #a0a0a0;border-bottom:1px solid #fff;border-right:1px solid #fff;box-sizing:border-box;"></div>
<div class="t" id="t37" style="left:950.00px;top:284.97px;font-size:14.5px;font-family:'Liberation Sans', sans-serif;color:#acacac;font-weight:bold;transform:scaleX(1.0125);">Double stars - show</div>
<svg class="a" style="left:1106px;top:277px" width="18" height="18"><circle cx="9" cy="9" r="7" fill="#fff" stroke="#cdcdcd" stroke-width="3.2"/><circle cx="9" cy="9" r="2.6" fill="#fff"/></svg>
<div class="t" id="t38" style="left:1129.00px;top:286.97px;font-size:12.5px;font-family:'Liberation Sans', sans-serif;color:#acacac;transform:scaleX(0.9604);">Both</div>
<svg class="a" style="left:1172px;top:277px" width="18" height="18"><circle cx="9" cy="9" r="7.5" fill="#f5f5f5" stroke="#d2d2d2" stroke-width="1"/></svg>
<div class="t" id="t39" style="left:1195.70px;top:286.97px;font-size:12.5px;font-family:'Liberation Sans', sans-serif;color:#acacac;transform:scaleX(0.9033);">Primary</div>
<svg class="a" style="left:1253px;top:277px" width="18" height="18"><circle cx="9" cy="9" r="7.5" fill="#f5f5f5" stroke="#d2d2d2" stroke-width="1"/></svg>
<div class="t" id="t40" style="left:1276.80px;top:286.97px;font-size:12.5px;font-family:'Liberation Sans', sans-serif;color:#acacac;transform:scaleX(0.9002);">Secondary</div>
<div class="t" id="t41" style="left:940.00px;top:320.97px;font-size:14.5px;font-family:'Liberation Sans', sans-serif;color:#137313;font-weight:bold;transform:scaleX(1.1417);">Quality of the fit</div>
<div class="a" style="left:1073.0px;top:306.6px;width:271.0px;height:24.2px;background:#fff;border:1px solid #7a7a7a;box-sizing:border-box;border-radius:1px;"></div>
<div class="t" id="t42" style="left:1077.00px;top:317.97px;font-size:14.5px;font-family:'Liberation Sans', sans-serif;color:#111;transform:scaleX(0.8871);">Astrometry only. No reliable size</div>
<svg class="a" style="left:1326px;top:313px" width="12" height="10"><polyline points="1,2.5 6,7.5 11,2.5" fill="none" stroke="#444" stroke-width="1.1"/></svg>
<div class="t" id="t43" style="left:973.00px;top:346.47px;font-size:14.5px;font-family:'Liberation Sans', sans-serif;color:#8b0b0b;font-weight:bold;transform:scaleX(1.0302);">Review flags</div>
<div class="a" style="left:1073.0px;top:333.8px;width:270.0px;height:23.4px;background:#e0ffff;border-top:2px solid #808080;border-left:2px solid #808080;border-bottom:1px solid #f4f4f4;border-right:1px solid #f4f4f4;box-sizing:border-box;"></div>
<div class="a" style="left:1078.6px;top:339.0px;width:16.0px;height:16.0px;background:#f7f7f7;border:1px solid #5c5c5c;box-sizing:border-box;border-radius:3px;"></div>
<div class="t" id="t44" style="left:1102.00px;top:346.30px;font-size:15px;font-family:'Liberation Sans', sans-serif;color:#111;transform:scaleX(1.0132);">0 items are tagged for review</div>
<div class="a" style="left:929.0px;top:361.4px;width:424.0px;height:101.6px;background:#f0ffff;border-top:2px solid #6a6a6a;border-left:2px solid #6a6a6a;border-bottom:1px solid #f6f6f6;border-right:1px solid #f6f6f6;box-sizing:border-box;"></div>
<div class="t" id="t45" style="left:939.36px;top:388.57px;font-size:14.5px;font-family:'Liberation Sans', sans-serif;color:#7a0e22;font-weight:bold;">P</div>
<div class="t" id="t46" style="left:939.77px;top:405.37px;font-size:14.5px;font-family:'Liberation Sans', sans-serif;color:#7a0e22;font-weight:bold;">L</div>
<div class="t" id="t47" style="left:938.56px;top:422.17px;font-size:14.5px;font-family:'Liberation Sans', sans-serif;color:#7a0e22;font-weight:bold;">O</div>
<div class="t" id="t48" style="left:939.77px;top:438.07px;font-size:14.5px;font-family:'Liberation Sans', sans-serif;color:#7a0e22;font-weight:bold;">T</div>
<div class="t" id="t49" style="left:964.50px;top:384.37px;font-size:14.5px;font-family:'Liberation Sans', sans-serif;color:#7a0e22;font-weight:bold;transform:scaleX(1.0157);">Scale</div>
<div class="t" id="t50" style="left:964.50px;top:416.97px;font-size:14.5px;font-family:'Liberation Sans', sans-serif;color:#7a0e22;font-weight:bold;transform:scaleX(0.9822);">Size</div>
<div class="a" style="left:1012.3px;top:371.8px;width:336.7px;height:23.5px;background:#fff8d2;"></div>
<div class="a" style="left:1019.0px;top:378.5px;width:322.5px;height:4.5px;background:#e7e7e7;border:1px solid #d6d6d6;box-sizing:border-box;border-radius:2px;"></div>
<svg class="a" style="left:1012.3px;top:371.8px" width="336.7" height="23.5"><rect x="10.4" y="17.6" width="1" height="4" fill="#9a9a9a"/><rect x="26.2" y="17.6" width="1" height="4" fill="#9a9a9a"/><rect x="41.9" y="17.6" width="1" height="4" fill="#9a9a9a"/><rect x="57.7" y="17.6" width="1" height="4" fill="#9a9a9a"/><rect x="73.5" y="17.6" width="1" height="4" fill="#9a9a9a"/><rect x="89.2" y="17.6" width="1" height="4" fill="#9a9a9a"/><rect x="105.0" y="17.6" width="1" height="4" fill="#9a9a9a"/><rect x="120.8" y="17.6" width="1" height="4" fill="#9a9a9a"/><rect x="136.5" y="17.6" width="1" height="4" fill="#9a9a9a"/><rect x="152.3" y="17.6" width="1" height="4" fill="#9a9a9a"/><rect x="168.1" y="17.6" width="1" height="4" fill="#9a9a9a"/><rect x="183.8" y="17.6" width="1" height="4" fill="#9a9a9a"/><rect x="199.6" y="17.6" width="1" height="4" fill="#9a9a9a"/><rect x="215.3" y="17.6" width="1" height="4" fill="#9a9a9a"/><rect x="231.1" y="17.6" width="1" height="4" fill="#9a9a9a"/><rect x="246.9" y="17.6" width="1" height="4" fill="#9a9a9a"/><rect x="262.6" y="17.6" width="1" height="4" fill="#9a9a9a"/><rect x="278.4" y="17.6" width="1" height="4" fill="#9a9a9a"/><rect x="294.2" y="17.6" width="1" height="4" fill="#9a9a9a"/><rect x="309.9" y="17.6" width="1" height="4" fill="#9a9a9a"/><rect x="325.7" y="17.6" width="1" height="4" fill="#9a9a9a"/></svg>
<svg class="a" style="left:1175px;top:375px" width="11" height="13"><path d="M1.2 1 H9.3 V8.6 L5.25 12.4 L1.2 8.6 Z" fill="#0078d4" stroke="#0067c0" stroke-width="0.8"/></svg>
<div class="a" style="left:1001.8px;top:403.7px;width:202.7px;height:27.9px;background:#f0fff0;border-top:2px solid #6a6a6a;border-left:2px solid #6a6a6a;border-bottom:1px solid #f6f6f6;border-right:1px solid #f6f6f6;box-sizing:border-box;"></div>
<svg class="a" style="left:1013px;top:408.5px" width="18" height="18"><circle cx="9" cy="9" r="6.2" fill="#fff" stroke="#0067c0" stroke-width="4"/></svg>
<svg class="a" style="left:1092.7px;top:408.5px" width="18" height="18"><circle cx="9" cy="9" r="7.6" fill="#f3f3f3" stroke="#5c5c5c" stroke-width="1"/></svg>
<svg class="a" style="left:1148px;top:408.5px" width="18" height="18"><circle cx="9" cy="9" r="7.6" fill="#f3f3f3" stroke="#5c5c5c" stroke-width="1"/></svg>
<div class="t" id="t51" style="left:1037.50px;top:416.97px;font-size:14.5px;font-family:'Liberation Sans', sans-serif;color:#7a0e22;font-weight:bold;transform:scaleX(0.9370);">normal</div>
<div class="t" id="t52" style="left:1116.40px;top:416.97px;font-size:14.5px;font-family:'Liberation Sans', sans-serif;color:#7a0e22;font-weight:bold;transform:scaleX(1.1204);">x 2</div>
<div class="t" id="t53" style="left:1172.00px;top:416.97px;font-size:14.5px;font-family:'Liberation Sans', sans-serif;color:#7a0e22;font-weight:bold;transform:scaleX(1.0906);">x 5</div>
<div class="t" id="t54" style="left:1233.40px;top:417.47px;font-size:14.5px;font-family:'Liberation Sans', sans-serif;color:#850a85;font-weight:bold;transform:scaleX(0.9808);">Form opacity</div>
<div class="a" style="left:1206.0px;top:432.0px;width:144.0px;height:26.0px;background:#fff8d2;"></div>
<div class="a" style="left:1214.0px;top:440.0px;width:127.0px;height:4.5px;background:#e7e7e7;border:1px solid #d6d6d6;box-sizing:border-box;border-radius:2px;"></div>
<svg class="a" style="left:1206px;top:432px" width="144.0" height="26.0"><rect x="12.8" y="21.0" width="1" height="4" fill="#9a9a9a"/><rect x="37.0" y="21.0" width="1" height="4" fill="#9a9a9a"/><rect x="60.5" y="21.0" width="1" height="4" fill="#9a9a9a"/><rect x="83.3" y="21.0" width="1" height="4" fill="#9a9a9a"/><rect x="106.5" y="21.0" width="1" height="4" fill="#9a9a9a"/><rect x="130.5" y="21.0" width="1" height="4" fill="#9a9a9a"/></svg>
<svg class="a" style="left:1331px;top:434px" width="11" height="16"><path d="M1 1 H10.2 V11 L5.6 15.2 L1 11 Z" fill="#0078d4" stroke="#0067c0" stroke-width="0.8"/></svg>
<div class="t" id="t55" style="left:965.30px;top:448.17px;font-size:14.5px;font-family:'Liberation Sans', sans-serif;color:#7a0e22;font-weight:bold;transform:scaleX(1.0344);">Scroll range x1.25</div>
<div class="a" style="left:1104.0px;top:441.5px;width:16.0px;height:16.0px;background:#f7f7f7;border:1px solid #5c5c5c;box-sizing:border-box;border-radius:3px;"></div>
<div class="t" id="t56" style="left:946.00px;top:485.85px;font-size:14px;font-family:'Liberation Sans', sans-serif;color:#1a1a1a;transform:scaleX(0.9432);">RMS fit -17.0 ±1.8 km</div>
<div class="a" style="left:936.8px;top:502.8px;width:408.2px;height:440.7px;background:#fff;border-top:2px solid #7a7a7a;border-left:2px solid #7a7a7a;border-bottom:1px solid #e6e6e6;border-right:1px solid #e6e6e6;box-sizing:border-box;"></div>
<svg class="a" style="left:940px;top:505px" width="100" height="50"><circle cx="8.2" cy="9" r="2.1" fill="#ff78c8"/><circle cx="26.9" cy="9" r="2.1" fill="#ff78c8"/><circle cx="45.6" cy="9" r="2.1" fill="#ff78c8"/><circle cx="64.4" cy="9" r="2.1" fill="#ff78c8"/><circle cx="83.0" cy="9" r="2.1" fill="#ff78c8"/><line x1="7" y1="23.2" x2="85" y2="23.2" stroke="#0000ff" stroke-width="4" stroke-linecap="round"/><line x1="7" y1="38.2" x2="85" y2="38.2" stroke="#8a2be2" stroke-width="4" stroke-linecap="round"/></svg>
<div class="a" style="left:1050px;top:505px;width:292.5px;height:60px;overflow:hidden">
<div class="t" id="t57" style="left:6.80px;top:10.68px;font-size:17px;font-family:'Liberation Mono', monospace;color:#2a2a2a;">1(P) Predicted</div>
<div class="t" id="t58" style="left:6.80px;top:25.68px;font-size:17px;font-family:'Liberation Mono', monospace;color:#2a2a2a;">3    K Bender, near Death Valley</div>
<div class="t" id="t59" style="left:6.80px;top:40.68px;font-size:17px;font-family:'Liberation Mono', monospace;color:#2a2a2a;">4    R Nolthenius, near Zabriskie</div>
</div>
<div class="a" style="left:913.5px;top:513.0px;width:1.0px;height:21.0px;background:#a8a8a8;"></div>
<div class="a" style="left:938.8px;top:935.0px;width:405.2px;height:7.5px;background:#f0f0f0;"></div>
<div class="a" style="left:796.4px;top:764.5px;width:562.6px;height:171.3px;background:#b0c4de;border:1px solid #5e5e5e;box-sizing:border-box;"></div>
<div class="a" style="left:797.4px;top:765.5px;width:560.6px;height:1.5px;background:#8a9ab0;"></div>
<div class="t" id="t60" style="left:799.50px;top:781.50px;font-size:15px;font-family:'Liberation Sans', sans-serif;color:#2c3e5e;font-weight:bold;">DAMIT</div>
<div class="a" style="left:855.6px;top:771.0px;width:16.0px;height:19.0px;background:#fafafa;border-radius:3px;"></div>
<div class="a" style="left:857.1px;top:772.5px;width:13.0px;height:16.0px;background:#00ee00;"></div>
<div class="t" id="t61" style="left:859.70px;top:781.65px;font-size:14px;font-family:'Liberation Sans', sans-serif;color:#000;font-weight:bold;">1</div>
<div class="a" style="left:876.8px;top:771.0px;width:19.0px;height:20.0px;background:#ededed;border:1px solid #f6f6f6;box-sizing:border-box;border-radius:4px;"></div>
<div class="t" id="t62" style="left:882.68px;top:781.49px;font-size:13px;font-family:'Liberation Sans', sans-serif;color:#a9a9a9;">2</div>
<div class="a" style="left:899.0px;top:771.0px;width:19.0px;height:20.0px;background:#ededed;border:1px solid #f6f6f6;box-sizing:border-box;border-radius:4px;"></div>
<div class="t" id="t63" style="left:904.88px;top:781.49px;font-size:13px;font-family:'Liberation Sans', sans-serif;color:#a9a9a9;">3</div>
<div class="a" style="left:921.2px;top:771.0px;width:19.0px;height:20.0px;background:#ededed;border:1px solid #f6f6f6;box-sizing:border-box;border-radius:4px;"></div>
<div class="t" id="t64" style="left:927.08px;top:781.49px;font-size:13px;font-family:'Liberation Sans', sans-serif;color:#a9a9a9;">4</div>
<div class="a" style="left:944.0px;top:771.0px;width:19.0px;height:20.0px;background:#ededed;border:1px solid #f6f6f6;box-sizing:border-box;border-radius:4px;"></div>
<div class="t" id="t65" style="left:949.88px;top:781.49px;font-size:13px;font-family:'Liberation Sans', sans-serif;color:#a9a9a9;">5</div>
<div class="a" style="left:966.8px;top:771.0px;width:19.0px;height:20.0px;background:#ededed;border:1px solid #f6f6f6;box-sizing:border-box;border-radius:4px;"></div>
<div class="t" id="t66" style="left:972.68px;top:781.49px;font-size:13px;font-family:'Liberation Sans', sans-serif;color:#a9a9a9;">6</div>
<div class="a" style="left:994.3px;top:771.0px;width:85.7px;height:20.5px;background:#b0e4ea;border:2px solid #f6f8fa;box-sizing:border-box;border-radius:3px;"></div>
<div class="t" id="t67" style="left:1000.50px;top:781.65px;font-size:14px;font-family:'Liberation Sans', sans-serif;color:#111;transform:scaleX(0.9273);">Light curves</div>
<div class="t" id="t68" style="left:1089.70px;top:781.50px;font-size:15px;font-family:'Liberation Sans', sans-serif;color:#2c3e5e;font-weight:bold;transform:scaleX(0.9600);">ISAM</div>
<div class="a" style="left:1134.6px;top:771.0px;width:19.0px;height:20.0px;background:#ededed;border:1px solid #f6f6f6;box-sizing:border-box;border-radius:4px;"></div>
<div class="t" id="t69" style="left:1140.48px;top:781.49px;font-size:13px;font-family:'Liberation Sans', sans-serif;color:#a9a9a9;">1</div>
<div class="a" style="left:1164.0px;top:771.0px;width:19.0px;height:20.0px;background:#ededed;border:1px solid #f6f6f6;box-sizing:border-box;border-radius:4px;"></div>
<div class="t" id="t70" style="left:1169.88px;top:781.49px;font-size:13px;font-family:'Liberation Sans', sans-serif;color:#a9a9a9;">2</div>
<div class="a" style="left:1194.4px;top:771.0px;width:19.0px;height:20.0px;background:#ededed;border:1px solid #f6f6f6;box-sizing:border-box;border-radius:4px;"></div>
<div class="t" id="t71" style="left:1200.28px;top:781.49px;font-size:13px;font-family:'Liberation Sans', sans-serif;color:#a9a9a9;">3</div>
<div class="a" style="left:1224.4px;top:771.0px;width:19.0px;height:20.0px;background:#ededed;border:1px solid #f6f6f6;box-sizing:border-box;border-radius:4px;"></div>
<div class="t" id="t72" style="left:1230.28px;top:781.49px;font-size:13px;font-family:'Liberation Sans', sans-serif;color:#a9a9a9;">4</div>
<div class="a" style="left:1254.0px;top:771.0px;width:19.0px;height:20.0px;background:#ededed;border:1px solid #f6f6f6;box-sizing:border-box;border-radius:4px;"></div>
<div class="t" id="t73" style="left:1259.88px;top:781.49px;font-size:13px;font-family:'Liberation Sans', sans-serif;color:#a9a9a9;">5</div>
<div class="a" style="left:1284.0px;top:771.0px;width:19.0px;height:20.0px;background:#ededed;border:1px solid #f6f6f6;box-sizing:border-box;border-radius:4px;"></div>
<div class="t" id="t74" style="left:1289.88px;top:781.49px;font-size:13px;font-family:'Liberation Sans', sans-serif;color:#a9a9a9;">6</div>
<div class="a" style="left:1315.2px;top:770.3px;width:17.8px;height:19.2px;background:#2e36b8;border:2px solid #f2f2f2;box-sizing:border-box;border-radius:2px;"></div>
<div class="t" id="t75" style="left:1319.51px;top:780.80px;font-size:15px;font-family:'Liberation Sans', sans-serif;color:#ffee00;font-weight:bold;">?</div>
<div class="a" style="left:1336.0px;top:770.3px;width:18.0px;height:19.2px;background:#dc143c;border:2px solid #f2f2f2;box-sizing:border-box;border-radius:2px;"></div>
<div class="t" id="t76" style="left:1340.33px;top:781.15px;font-size:14px;font-family:'Liberation Sans', sans-serif;color:#fff;">X</div>
<div class="t" id="t77" style="left:806.00px;top:801.55px;font-size:14px;font-family:'Liberation Sans', sans-serif;color:#2c3e5e;transform:scaleX(0.9243);">Source</div>
<div class="t" id="t78" style="left:880.00px;top:801.55px;font-size:14px;font-family:'Liberation Sans', sans-serif;color:#2c3e5e;transform:scaleX(0.9286);">ID</div>
<div class="t" id="t79" style="left:923.00px;top:801.55px;font-size:14px;font-family:'Liberation Sans', sans-serif;color:#2c3e5e;transform:scaleX(0.9586);">Surf/Vol</div>
<div class="a" style="left:803.0px;top:811.0px;width:48.4px;height:22.5px;background:#f0f0f0;border-top:1px solid #fafafa;border-left:1px solid #fafafa;border-bottom:2px solid #9aa6b6;border-right:1px solid #c8d0da;box-sizing:border-box;"></div>
<div class="t" id="t80" style="left:806.00px;top:823.15px;font-size:14px;font-family:'Liberation Sans', sans-serif;color:#111;transform:scaleX(0.8953);">DAMIT</div>
<div class="a" style="left:854.6px;top:811.0px;width:65.6px;height:22.5px;background:#f0f0f0;border-top:1px solid #fafafa;border-left:1px solid #fafafa;border-bottom:2px solid #9aa6b6;border-right:1px solid #c8d0da;box-sizing:border-box;"></div>
<div class="t" id="t81" style="left:857.70px;top:823.15px;font-size:14px;font-family:'Liberation Sans', sans-serif;color:#111;transform:scaleX(0.9180);">5792</div>
<div class="a" style="left:923.4px;top:811.0px;width:46.6px;height:22.5px;background:#f0f0f0;border-top:1px solid #fafafa;border-left:1px solid #fafafa;border-bottom:2px solid #9aa6b6;border-right:1px solid #c8d0da;box-sizing:border-box;"></div>
<div class="t" id="t82" style="left:927.60px;top:823.15px;font-size:14px;font-family:'Liberation Sans', sans-serif;color:#111;transform:scaleX(0.9045);">1.036</div>
<div class="a" style="left:800.0px;top:836.5px;width:42.0px;height:24.5px;background:#ffff00;border:1px solid #3a3a3a;box-sizing:border-box;"></div>
<div class="t" id="t83" style="left:809.85px;top:849.30px;font-size:15px;font-family:'Liberation Sans', sans-serif;color:#000;font-weight:bold;transform:scaleX(0.9210);">Dia</div>
<div class="t" id="t84" style="left:847.00px;top:846.45px;font-size:14px;font-family:'Liberation Sans', sans-serif;color:#4d5d80;font-style:italic;transform:scaleX(0.9092);">Values in memory =&gt;</div>
<div class="a" style="left:973.0px;top:794.5px;width:379.0px;height:62.5px;background:#fff8dc;border-top:2px solid #4a4a4a;border-left:1px solid #e8e8e8;border-bottom:1px solid #f8f8f8;border-right:1px solid #f8f8f8;box-sizing:border-box;"></div>
<div class="t" id="t85" style="left:1002.70px;top:803.15px;font-size:14px;font-family:'Liberation Sans', sans-serif;color:#111;transform:scaleX(0.9012);">Fit quality</div>
<div class="a" style="left:976.3px;top:812.6px;width:120.7px;height:25.2px;background:#fff;border:1px solid #7a7a7a;box-sizing:border-box;border-radius:2px;"></div>
<div class="t" id="t86" style="left:980.50px;top:826.65px;font-size:14px;font-family:'Liberation Sans', sans-serif;color:#111;transform:scaleX(0.9392);">Not constrained</div>
<svg class="a" style="left:1082px;top:821px" width="12" height="10"><polyline points="1,2 5.5,6.5 10,2" fill="none" stroke="#555" stroke-width="1.1"/></svg>
<div class="t" id="t87" style="left:980.50px;top:846.45px;font-size:14px;font-family:'Liberation Sans', sans-serif;color:#6a1a9a;transform:scaleX(0.9392);">Not constrained</div>
<div class="t" id="t88" style="left:1100.60px;top:802.65px;font-size:14px;font-family:'Liberation Sans', sans-serif;color:#111;transform:scaleX(1.0242);">Ph Corr</div>
<div class="a" style="left:1104.0px;top:813.0px;width:46.0px;height:22.2px;background:#f0f0f0;border-top:1px solid #fafafa;border-left:1px solid #fafafa;border-bottom:2px solid #9aa6b6;border-right:1px solid #c8d0da;box-sizing:border-box;"></div>
<div class="t" id="t89" style="left:1108.00px;top:825.15px;font-size:14px;font-family:'Liberation Sans', sans-serif;color:#111;">0°</div>
<div class="t" id="t90" style="left:1105.50px;top:845.85px;font-size:14px;font-family:'Liberation Sans', sans-serif;color:#6a1a9a;">0°</div>
<div class="t" id="t91" style="left:1164.00px;top:802.65px;font-size:14px;font-family:'Liberation Sans', sans-serif;color:#111;transform:scaleX(0.8984);">Minimum dia</div>
<div class="a" style="left:1161.5px;top:813.7px;width:46.0px;height:22.5px;background:#ffc0cb;border-bottom:2px solid #d8d8d8;border-right:1px solid #e8e8e8;box-sizing:border-box;"></div>
<div class="a" style="left:1211.2px;top:813.0px;width:36.8px;height:28.0px;background:#f6f6f6;border:1px solid #d0d0d0;box-sizing:border-box;border-radius:4px;"></div>
<div class="a" style="left:1213.7px;top:815.5px;width:31.8px;height:23.0px;background:#7cfc00;"></div>
<div class="t" id="t92" style="left:1218.10px;top:827.30px;font-size:15px;font-family:'Liberation Sans', sans-serif;color:#111;transform:scaleX(1.0215);">Set</div>
<div class="t" id="t93" style="left:1163.00px;top:846.45px;font-size:14px;font-family:'Liberation Sans', sans-serif;color:#6a1a9a;">0</div>
<div class="t" id="t94" style="left:1259.40px;top:803.75px;font-size:14px;font-family:'Liberation Sans', sans-serif;color:#111;transform:scaleX(0.8949);">Maximum dia</div>
<div class="a" style="left:1259.4px;top:813.7px;width:46.0px;height:22.5px;background:#ffc0cb;border-bottom:2px solid #d8d8d8;border-right:1px solid #e8e8e8;box-sizing:border-box;"></div>
<div class="a" style="left:1308.7px;top:813.0px;width:36.3px;height:28.0px;background:#f6f6f6;border:1px solid #d0d0d0;box-sizing:border-box;border-radius:4px;"></div>
<div class="a" style="left:1311.2px;top:815.5px;width:31.3px;height:23.0px;background:#7cfc00;"></div>
<div class="t" id="t95" style="left:1315.40px;top:827.30px;font-size:15px;font-family:'Liberation Sans', sans-serif;color:#111;transform:scaleX(1.0215);">Set</div>
<div class="t" id="t96" style="left:1261.60px;top:845.15px;font-size:14px;font-family:'Liberation Sans', sans-serif;color:#6a1a9a;font-weight:bold;transform:scaleX(0.8672);">- - - -</div>
<div class="t" id="t97" style="left:912.80px;top:866.69px;font-size:13px;font-family:'Liberation Sans', sans-serif;color:#111;font-weight:bold;transform:scaleX(1.1346);">Chords do not provide any constraint on the SM size</div>
<div class="t" id="t98" style="left:806.50px;top:886.45px;font-size:14px;font-family:'Liberation Sans', sans-serif;color:#2c3e5e;transform:scaleX(0.9157);">Version info</div>
<div class="a" style="left:881.4px;top:876.5px;width:337.6px;height:22.5px;background:#f0f0f0;border-top:1px solid #fafafa;border-left:1px solid #fafafa;border-bottom:2px solid #9aa6b6;border-right:1px solid #c8d0da;box-sizing:border-box;"></div>
<div class="t" id="t99" style="left:885.30px;top:887.45px;font-size:14px;font-family:'Liberation Sans', sans-serif;color:#111;transform:scaleX(0.9261);">2019-10-23, Q=1</div>
<div class="t" id="t100" style="left:805.00px;top:912.85px;font-size:14px;font-family:'Liberation Sans', sans-serif;color:#2c3e5e;transform:scaleX(0.9234);">Image scale</div>
<div class="a" style="left:882.0px;top:901.9px;width:337.0px;height:28.1px;background:#fff8d2;"></div>
<div class="a" style="left:890.5px;top:922.8px;width:319.5px;height:4.5px;background:#e7e7e7;border:1px solid #d6d6d6;box-sizing:border-box;border-radius:2px;"></div>
<svg class="a" style="left:882px;top:901.9px" width="337.0" height="28.1"><rect x="12.7" y="7.1" width="1" height="4" fill="#9a9a9a"/><rect x="20.1" y="7.1" width="1" height="4" fill="#9a9a9a"/><rect x="27.5" y="7.1" width="1" height="4" fill="#9a9a9a"/><rect x="35.0" y="7.1" width="1" height="4" fill="#9a9a9a"/><rect x="42.4" y="7.1" width="1" height="4" fill="#9a9a9a"/><rect x="49.8" y="7.1" width="1" height="4" fill="#9a9a9a"/><rect x="57.2" y="7.1" width="1" height="4" fill="#9a9a9a"/><rect x="64.6" y="7.1" width="1" height="4" fill="#9a9a9a"/><rect x="72.1" y="7.1" width="1" height="4" fill="#9a9a9a"/><rect x="79.5" y="7.1" width="1" height="4" fill="#9a9a9a"/><rect x="86.9" y="7.1" width="1" height="4" fill="#9a9a9a"/><rect x="94.3" y="7.1" width="1" height="4" fill="#9a9a9a"/><rect x="101.7" y="7.1" width="1" height="4" fill="#9a9a9a"/><rect x="109.2" y="7.1" width="1" height="4" fill="#9a9a9a"/><rect x="116.6" y="7.1" width="1" height="4" fill="#9a9a9a"/><rect x="124.0" y="7.1" width="1" height="4" fill="#9a9a9a"/><rect x="131.4" y="7.1" width="1" height="4" fill="#9a9a9a"/><rect x="138.8" y="7.1" width="1" height="4" fill="#9a9a9a"/><rect x="146.3" y="7.1" width="1" height="4" fill="#9a9a9a"/><rect x="153.7" y="7.1" width="1" height="4" fill="#9a9a9a"/><rect x="161.1" y="7.1" width="1" height="4" fill="#9a9a9a"/><rect x="168.5" y="7.1" width="1" height="4" fill="#9a9a9a"/><rect x="175.9" y="7.1" width="1" height="4" fill="#9a9a9a"/><rect x="183.4" y="7.1" width="1" height="4" fill="#9a9a9a"/><rect x="190.8" y="7.1" width="1" height="4" fill="#9a9a9a"/><rect x="198.2" y="7.1" width="1" height="4" fill="#9a9a9a"/><rect x="205.6" y="7.1" width="1" height="4" fill="#9a9a9a"/><rect x="213.0" y="7.1" width="1" height="4" fill="#9a9a9a"/><rect x="220.5" y="7.1" width="1" height="4" fill="#9a9a9a"/><rect x="227.9" y="7.1" width="1" height="4" fill="#9a9a9a"/><rect x="235.3" y="7.1" width="1" height="4" fill="#9a9a9a"/><rect x="242.7" y="7.1" width="1" height="4" fill="#9a9a9a"/><rect x="250.1" y="7.1" width="1" height="4" fill="#9a9a9a"/><rect x="257.6" y="7.1" width="1" height="4" fill="#9a9a9a"/><rect x="265.0" y="7.1" width="1" height="4" fill="#9a9a9a"/><rect x="272.4" y="7.1" width="1" height="4" fill="#9a9a9a"/><rect x="279.8" y="7.1" width="1" height="4" fill="#9a9a9a"/><rect x="287.2" y="7.1" width="1" height="4" fill="#9a9a9a"/><rect x="294.7" y="7.1" width="1" height="4" fill="#9a9a9a"/><rect x="302.1" y="7.1" width="1" height="4" fill="#9a9a9a"/><rect x="309.5" y="7.1" width="1" height="4" fill="#9a9a9a"/><rect x="316.9" y="7.1" width="1" height="4" fill="#9a9a9a"/><rect x="324.3" y="7.1" width="1" height="4" fill="#9a9a9a"/></svg>
<svg class="a" style="left:1050px;top:916px" width="12" height="15"><path d="M1 14.5 V5 L5.8 0.8 L10.6 5 V14.5 Z" fill="#0078d4" stroke="#0067c0" stroke-width="0.8"/></svg>
<div class="a" style="left:1231.0px;top:877.4px;width:121.5px;height:54.6px;background:#ffc0cb;border:3px solid #fbfbfb;box-sizing:border-box;border-radius:4px;"></div>
<div class="t" id="t101" style="left:1245.75px;top:896.30px;font-size:15px;font-family:'Liberation Sans', sans-serif;color:#a3102c;font-weight:bold;transform:scaleX(1.0354);">Save/update</div>
<div class="t" id="t102" style="left:1251.00px;top:912.70px;font-size:15px;font-family:'Liberation Sans', sans-serif;color:#a3102c;font-weight:bold;transform:scaleX(0.9912);">model 5792</div>
<div class="t" id="t103" style="left:21.80px;top:93.45px;font-size:16px;font-family:'Liberation Sans', sans-serif;color:#ffffff;font-weight:bold;transform:scaleX(1.0912);">(84) Klio  2026 Feb 15   82.2 km</div>
<div class="t" id="t104" style="left:21.80px;top:113.65px;font-size:16px;font-family:'Liberation Sans', sans-serif;color:#ffffff;font-weight:bold;transform:scaleX(1.0828);">Geocentric  X  3703.1 ±4.2  Y  1877.8 ±27.5 km</div>
<div class="t" id="t105" style="left:457.50px;top:114.69px;font-size:28px;font-family:'Liberation Sans', sans-serif;color:#ffffff;font-weight:bold;transform:scaleX(0.9884);">N</div>
<div class="t" id="t106" style="left:29.80px;top:533.95px;font-size:29px;font-family:'Liberation Sans', sans-serif;color:#ffffff;transform:scaleX(0.9409);">E</div>
<div class="t" id="t107" style="left:726.00px;top:199.17px;font-size:15.5px;font-family:'Liberation Serif', serif;color:#f4f4f4;transform:scaleX(0.9562);">Sky Plane</div>
<div class="t" id="t108" style="left:737.80px;top:217.37px;font-size:15.5px;font-family:'Liberation Serif', serif;color:#f4f4f4;transform:scaleX(0.9063);">(84) Klio</div>
<div class="t" id="t109" style="left:708.00px;top:234.17px;font-size:15.5px;font-family:'Liberation Serif', serif;color:#f4f4f4;transform:scaleX(0.9017);">DAMIT #5792</div>
<div class="a" style="left:886.69px;top:506.90px;line-height:0;white-space:pre;font-family:&quot;Liberation Serif&quot;,serif;font-size:21px;color:#f4f4f4;transform-origin:0 0;transform:rotate(90deg) scaleX(0.8835);">50 mas</div>
<div class="t" id="t110" style="left:50.80px;top:918.13px;font-size:18px;font-family:'Liberation Serif', serif;color:#ffffff;transform:scaleX(1.0799);">Disappear</div>
<div class="t" id="t111" style="left:50.80px;top:935.63px;font-size:18px;font-family:'Liberation Serif', serif;color:#ffffff;transform:scaleX(1.0829);">Reappear</div>
<div class="t" id="t112" style="left:27.20px;top:957.58px;font-size:12.5px;font-family:'Liberation Serif', serif;color:#ffffff;transform:scaleX(0.9507);">Occult 4.2026.3.23</div>
<div class="t" id="t113" style="left:156.80px;top:957.58px;font-size:12.5px;font-family:'Liberation Serif', serif;color:#ffffff;transform:scaleX(0.9479);">Phase offset 0°</div>
<div class="t" id="t114" style="left:464.50px;top:914.25px;font-size:13.5px;font-family:'Liberation Serif', serif;color:#ffffff;transform:scaleX(1.0407);">(Volume) Mean dia = 75.4 km</div>
<div class="t" id="t115" style="left:294.80px;top:930.95px;font-size:13.5px;font-family:'Liberation Serif', serif;color:#ffffff;transform:scaleX(1.0208);">(Surface) Mean dia = 78.1 km</div>
<div class="t" id="t116" style="left:446.30px;top:958.41px;font-size:14.5px;font-family:'Liberation Serif', serif;color:#ffffff;font-style:italic;transform:scaleX(1.0186);">80 km</div>
<div class="t" id="t117" style="left:768.70px;top:958.41px;font-size:14.5px;font-family:'Liberation Serif', serif;color:#ffffff;transform:scaleX(1.0171);">Plot width: 137 km</div>
<div class="t" id="t118" style="left:667.20px;top:437.77px;font-size:12.5px;font-family:'Liberation Sans', sans-serif;color:#ffffff;">1</div>
<div class="t" id="t119" style="left:302.40px;top:504.95px;font-size:12px;font-family:'Liberation Serif', serif;color:#f0f0f0;">3</div>
<div class="t" id="t120" style="left:322.30px;top:519.15px;font-size:12px;font-family:'Liberation Serif', serif;color:#ffffff;">4</div>
<div class="t" id="t121" style="left:610.70px;top:552.75px;font-size:12px;font-family:'Liberation Serif', serif;color:#ffffff;">3</div>
<div class="t" id="t122" style="left:632.30px;top:566.75px;font-size:12px;font-family:'Liberation Serif', serif;color:#ffffff;">4</div>
</body></html>
